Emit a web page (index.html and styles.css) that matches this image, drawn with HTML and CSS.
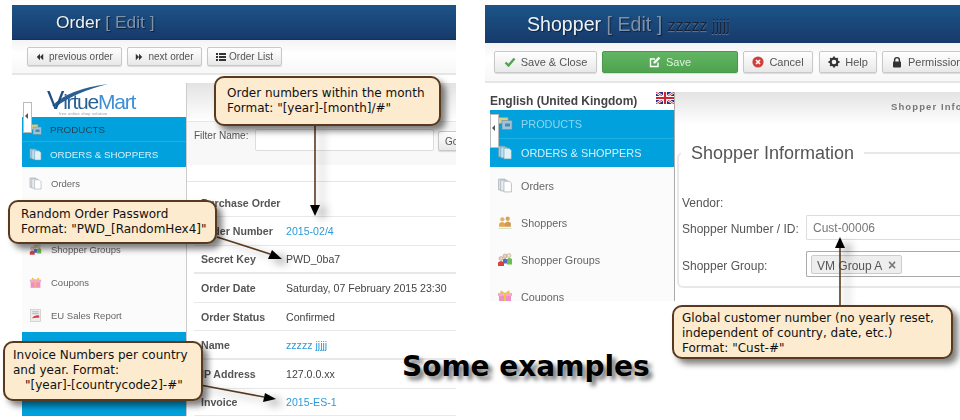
FILE: index.html
```html
<!DOCTYPE html>
<html lang="en">
<head>
    <meta charset="UTF-8">
    <meta name="viewport" content="width=device-width, initial-scale=1.0">
    <title>Some examples</title>
    <link rel="stylesheet" href="styles.css">
</head>
<body>
    <svg class="defs" width="0" height="0">
        <symbol id="i-prev" viewBox="0 0 10 10"><path d="M5 1v8L1 5zM9 1v8L5 5z" fill="#333"/></symbol>
        <symbol id="i-next" viewBox="0 0 10 10"><path d="M1 1v8l4-4zM5 1v8l4-4z" fill="#333"/></symbol>
        <symbol id="i-list" viewBox="0 0 10 10"><path d="M0 1h2v2H0zM3 1h7v2H3zM0 4h2v2H0zM3 4h7v2H3zM0 7h2v2H0zM3 7h7v2H3z" fill="#333"/></symbol>
        <symbol id="i-check" viewBox="0 0 12 12"><path d="M1.5 6.5l3 3 6-7" fill="none" stroke="#51a351" stroke-width="2.4"/></symbol>
        <symbol id="i-edit" viewBox="0 0 12 12"><path d="M9 6.5V10.5H1.5V3H6" fill="none" stroke="#fff" stroke-width="1.4"/><path d="M4.5 5.8L9.6 .8l1.7 1.7-5.1 5H4.5z" fill="#fff"/></symbol>
        <symbol id="i-cancel" viewBox="0 0 12 12"><circle cx="6" cy="6" r="5.6" fill="#d0403a"/><path d="M4 4l4 4M8 4l-4 4" stroke="#fff" stroke-width="1.6"/></symbol>
        <symbol id="i-gear" viewBox="0 0 12 12"><circle cx="6" cy="6" r="3.4" fill="none" stroke="#333" stroke-width="2.2"/><path d="M6 .5v11M.5 6h11M2.2 2.2l7.6 7.6M9.8 2.2l-7.6 7.6" stroke="#333" stroke-width="1.8" stroke-dasharray="2.4 6.2"/></symbol>
        <symbol id="i-lock" viewBox="0 0 12 12"><path d="M3.6 6V4a2.4 2.4 0 0 1 4.8 0v2" fill="none" stroke="#333" stroke-width="1.4"/><rect x="2" y="5.5" width="8" height="6" rx=".8" fill="#333"/></symbol>
        <symbol id="i-box" viewBox="0 0 16 14"><rect x="1" y="1" width="10" height="6" fill="#d8cf8a" stroke="#a39c63" stroke-width=".6"/><rect x="5" y="4" width="10" height="9" fill="#9fc3d8" stroke="#6f8ea3" stroke-width=".6"/><rect x="8" y="7" width="5" height="3" fill="#4f87b0"/></symbol>
        <symbol id="i-docs" viewBox="0 0 14 14"><path d="M1 1h6v10H1z" fill="#dfe3e6" stroke="#9aa5ad" stroke-width=".6"/><path d="M3 2h6v10H3z" fill="#eceff1" stroke="#9aa5ad" stroke-width=".6"/><path d="M6 3h5l2 2v8H6z" fill="#fff" stroke="#9aa5ad" stroke-width=".6"/></symbol>
        <symbol id="i-docs-on" viewBox="0 0 14 14"><path d="M1 1h6v10H1z" fill="#a9cfe2" stroke="#6d9cb3" stroke-width=".6"/><path d="M3 2h6v10H3z" fill="#c3e0ee" stroke="#6d9cb3" stroke-width=".6"/><path d="M6 3h5l2 2v8H6z" fill="#e0f1f9" stroke="#6d9cb3" stroke-width=".6"/></symbol>
        <symbol id="i-shoppers" viewBox="0 0 14 14"><circle cx="4.5" cy="4" r="2" fill="#e5b06a"/><circle cx="9.5" cy="3.5" r="2" fill="#d9a15a"/><path d="M1.5 11V8q3-3 5.500 0v3z" fill="#e9a24a"/><path d="M7 11V7.500q2.500-3 5.500 0V11z" fill="#cf9a52"/><path d="M1 12h12v1H1z" fill="#cfe3c2"/></symbol>
        <symbol id="i-groups" viewBox="0 0 16 14"><circle cx="4" cy="6" r="2" fill="#f1d2b0" stroke="#a66" stroke-width=".4"/><circle cx="8" cy="3.500" r="2" fill="#f1d2b0" stroke="#a66" stroke-width=".4"/><circle cx="12" cy="3" r="2" fill="#f4e4d2" stroke="#888" stroke-width=".4"/><path d="M1 13.500V10q3-3 6 0v3.500z" fill="#d8413f"/><path d="M6 11V7q2-2 4 0v4z" fill="#4a6fc4"/><path d="M10 12V6.500q2.500-2 5 0V12z" fill="#6cbf4d"/></symbol>
        <symbol id="i-gift" viewBox="0 0 16 14"><rect x="1" y="3.500" width="14" height="3" fill="#f5a8d0"/><rect x="2" y="6.500" width="12" height="7" fill="#f08fc2"/><path d="M7 3.500h2v10H7z" fill="#e8c64a"/><path d="M8 3.500L4 .8 3 3.500zM8 3.500L12 .8l1 2.700z" fill="#e8c64a"/></symbol>
        <symbol id="i-report" viewBox="0 0 12 14"><rect x=".5" y=".5" width="11" height="13" fill="#eee" stroke="#bbb" stroke-width=".6"/><path d="M2.500 3h7M2.500 5h7" stroke="#999" stroke-width=".7"/><path d="M2 10q3-4 8-3v2.500q-4-.5-8 .5z" fill="#d2453f"/></symbol>
        <symbol id="i-flag" viewBox="0 0 18 12">
            <rect width="18" height="12" fill="#24327f"/>
            <path d="M0 0l18 12M18 0L0 12" stroke="#fff" stroke-width="2.4"/>
            <path d="M0 0l18 12M18 0L0 12" stroke="#cc2233" stroke-width=".9"/>
            <path d="M9 0v12M0 6h18" stroke="#fff" stroke-width="4"/>
            <path d="M9 0v12M0 6h18" stroke="#cc2233" stroke-width="2.200"/>
        </symbol>
    </svg>

    <div class="canvas">
        <!-- order screen -->
        <section class="shot shot-order">
            <header class="head"><h1>Order <span class="edit">[ Edit ]</span></h1></header>
            <div class="toolbar">
                <button class="btn"><svg class="ico"><use href="#i-prev"/></svg>previous order</button>
                <button class="btn"><svg class="ico"><use href="#i-next"/></svg>next order</button>
                <button class="btn"><svg class="ico ico-list"><use href="#i-list"/></svg>Order List</button>
            </div>
            <div class="body">
                <aside class="side">
                    <div class="logo">
                        <svg class="swoosh" viewBox="0 0 60 24"><path d="M2 23Q18 6 58 1Q26 9 7 23z" fill="#2a5f94"/></svg>
                        <span class="logo-name"><b>V</b>irtue<i>Mart</i></span>
                        <span class="logo-tag">free online shop solution</span>
                    </div>
                    <div class="handle"></div>
                    <div class="group">
                        <div class="group-row dark"><svg class="nav-ico"><use href="#i-box"/></svg>PRODUCTS</div>
                        <div class="group-row"><svg class="nav-ico"><use href="#i-docs-on"/></svg>ORDERS &amp; SHOPPERS</div>
                    </div>
                    <div class="nav-row"><svg class="nav-ico"><use href="#i-docs"/></svg>Orders</div>
                    <div class="nav-row"><svg class="nav-ico"><use href="#i-shoppers"/></svg>Shoppers</div>
                    <div class="nav-row"><svg class="nav-ico"><use href="#i-groups"/></svg>Shopper Groups</div>
                    <div class="nav-row"><svg class="nav-ico"><use href="#i-gift"/></svg>Coupons</div>
                    <div class="nav-row"><svg class="nav-ico"><use href="#i-report"/></svg>EU Sales Report</div>
                    <div class="group group-end"></div>
                </aside>
                <main class="main">
                    <div class="tabs"></div>
                    <div class="filter">
                        <label>Filter Name:</label>
                        <span class="field"></span>
                        <button class="btn btn-go">Go</button>
                    </div>
                    <div class="spacer"></div>
                    <div class="row row-first"><b>Purchase Order</b></div>
                    <div class="row"><b>Order Number</b><a>2015-02/4</a></div>
                    <div class="row thick"><b>Secret Key</b><span>PWD_0ba7</span></div>
                    <div class="row"><b>Order Date</b><span>Saturday, 07 February 2015 23:30</span></div>
                    <div class="row"><b>Order Status</b><span>Confirmed</span></div>
                    <div class="row thick"><b>Name</b><a>zzzzz jjjjj</a></div>
                    <div class="row"><b>IP Address</b><span>127.0.0.xx</span></div>
                    <div class="row thick"><b>Invoice</b><a>2015-ES-1</a></div>
                </main>
            </div>
        </section>

        <!-- shopper screen -->
        <section class="shot shot-shopper">
            <header class="head"><h1>Shopper <span class="edit">[ Edit ]</span> <small>zzzzz jjjjj</small></h1></header>
            <div class="toolbar">
                <button class="btn btn-close"><svg class="ico"><use href="#i-check"/></svg>Save &amp; Close</button>
                <button class="btn btn-save"><svg class="ico"><use href="#i-edit"/></svg>Save</button>
                <button class="btn btn-cancel"><svg class="ico"><use href="#i-cancel"/></svg>Cancel</button>
                <button class="btn btn-help"><svg class="ico"><use href="#i-gear"/></svg>Help</button>
                <button class="btn btn-perm"><svg class="ico"><use href="#i-lock"/></svg>Permissions</button>
            </div>
            <div class="body">
                <aside class="side">
                    <div class="lang"><span>English (United Kingdom)</span><svg class="flag"><use href="#i-flag"/></svg></div>
                    <div class="handle"></div>
                    <div class="group">
                        <div class="group-row dim"><svg class="nav-ico"><use href="#i-box"/></svg>PRODUCTS</div>
                        <div class="group-row"><svg class="nav-ico"><use href="#i-docs-on"/></svg>ORDERS &amp; SHOPPERS</div>
                    </div>
                    <div class="nav-row"><svg class="nav-ico"><use href="#i-docs"/></svg>Orders</div>
                    <div class="nav-row"><svg class="nav-ico"><use href="#i-shoppers"/></svg>Shoppers</div>
                    <div class="nav-row"><svg class="nav-ico"><use href="#i-groups"/></svg>Shopper Groups</div>
                    <div class="nav-row"><svg class="nav-ico"><use href="#i-gift"/></svg>Coupons</div>
                </aside>
                <main class="main">
                    <div class="tabs">Shopper Information</div>
                    <fieldset class="info">
                        <legend>Shopper Information</legend>
                        <div class="form-row form-vendor"><label>Vendor:</label></div>
                        <div class="form-row form-number"><label>Shopper Number / ID:</label><span class="input">Cust-00006</span></div>
                        <div class="form-row"><label>Shopper Group:</label><span class="input select"><span class="tag">VM Group A <em>×</em></span></span></div>
                    </fieldset>
                </main>
            </div>
        </section>

        <svg class="arrows" viewBox="0 0 960 420">
            <path d="M315 125V206" class="shaft"/><path d="M315 216l-5-11h10z"/>
            <path d="M217 237L270 254" class="shaft"/><path d="M282 259l-14 0 4-9z"/>
            <path d="M200 385L264 397" class="shaft"/><path d="M276 399l-13 3 2-9z"/>
            <path d="M840 305V247" class="shaft"/><path d="M840 237l-5 11h10z"/>
        </svg>

        <div class="note note-month">Order numbers within the month<br>Format: "[year]-[month]/#"</div>
        <div class="note note-pass">Random Order Password<br>Format: "PWD_[RandomHex4]"</div>
        <div class="note note-invoice">Invoice Numbers per country<br>and year. Format:<br><span class="indent">"[year]-[countrycode2]-#"</span></div>
        <div class="note note-cust">Global customer number (no yearly reset,<br>independent of country, date, etc.)<br>Format: "Cust-#"</div>

        <div class="caption">Some examples</div>
    </div>
</body>
</html>
```

FILE: styles.css
```css
body {
    margin: 0;
    background: #fff;
    font-family: "Liberation Sans", Arial, sans-serif;
    color: #444;
}
.defs {
    position: absolute;
}
.canvas {
    position: relative;
    width: 960px;
    height: 420px;
    overflow: hidden;
}

/* the two screenshots sit freely on the canvas */
.shot {
    position: absolute;
    overflow: hidden;
    background: #fff;
    filter: blur(0.35px);
}
.shot-order {
    left: 12px;
    top: 5px;
    width: 444px;
    height: 411px;
}
.shot-shopper {
    left: 485px;
    top: 5px;
    width: 475px;
    height: 296px;
}

.head {
    display: flex;
    align-items: center;
    height: 34px;
    padding-left: 44px;
    background: linear-gradient(#1c5488, #173a6b);
    border-bottom: 1px solid #123059;
}
.head h1 {
    margin: 0;
    font-size: 17.4px;
    font-weight: normal;
    color: #eef2f6;
    text-shadow: 1px 1px 1px rgba(0, 0, 0, 0.5);
    white-space: nowrap;
}
.edit {
    color: #7f90a6;
}
.head small {
    font-size: 16px;
    color: #16233a;
    text-shadow: 0 1px 1px rgba(255, 255, 255, 0.3);
}
.shot-shopper .head {
    height: 38px;
    padding-left: 42px;
    border-bottom: 0;
}
.shot-shopper .head h1 {
    font-size: 19.6px;
}

.toolbar {
    display: flex;
    gap: 5px;
    height: 35px;
    padding: 7px 0 0 15px;
    box-sizing: border-box;
    background: linear-gradient(#f3f3f3, #fff 40%, #f7f7f7);
    border-bottom: 2px solid #e6e6e6;
}
.shot-shopper .toolbar {
    height: 40px;
    padding: 8px 0 0 9px;
}
.btn {
    display: flex;
    align-items: center;
    justify-content: center;
    gap: 5px;
    height: 19px;
    padding: 0 6px;
    flex: none;
    box-sizing: border-box;
    font: 10px "Liberation Sans", Arial, sans-serif;
    color: #555;
    white-space: nowrap;
    background: linear-gradient(#fff, #e8e8e8);
    border: 1px solid #c8c8c8;
    border-radius: 2px;
    box-shadow: 0 1px 1px rgba(0, 0, 0, 0.12);
}
.shot-order .btn:nth-child(1) { width: 95px; }
.shot-order .btn:nth-child(2) { width: 75px; }
.shot-order .btn:nth-child(3) { width: 75px; }
.shot-shopper .btn {
    height: 22px;
    font-size: 11px;
}
.shot-shopper .btn-close { width: 103px; }
.shot-shopper .btn-save {
    width: 136px;
    color: #dff0df;
    background: linear-gradient(#62b562, #4fa34f);
    border-color: #4a994a;
}
.shot-shopper .btn-cancel { width: 70px; }
.shot-shopper .btn-help {
    width: 58px;
    margin-left: 1px;
}
.shot-shopper .btn-perm {
    width: 92px;
    padding-left: 8px;
    justify-content: flex-start;
}
.ico {
    width: 8px;
    height: 8px;
    flex: none;
}
.ico-list {
    width: 10px;
    height: 10px;
    margin-right: -2px;
}
.shot-shopper .ico {
    width: 12px;
    height: 12px;
}

.body {
    display: flex;
    align-items: flex-start;
    padding-left: 10px;
}
.shot-shopper .body {
    padding-left: 5px;
}
.side {
    position: relative;
    flex: none;
    width: 164px;
    background: #fbfbfb;
}
.shot-shopper .side {
    width: 184px;
}

.logo {
    position: relative;
    height: 42px;
    background: #fff;
}
.logo-name {
    position: absolute;
    left: 25px;
    top: 13px;
    font-size: 21px;
    line-height: 24px;
    letter-spacing: -1.2px;
    color: #2a5f94;
}
.logo-name b {
    font-size: 26px;
    font-weight: normal;
    color: #1d4f85;
}
.logo-name i {
    font-style: normal;
    color: #3f8fd6;
}
.logo-tag {
    position: absolute;
    left: 37px;
    top: 36px;
    font-size: 4px;
    line-height: 5px;
    letter-spacing: 0.2px;
    color: #89a;
    white-space: nowrap;
}
.swoosh {
    position: absolute;
    left: 28px;
    top: 8px;
    width: 60px;
    height: 24px;
}
.handle {
    position: absolute;
    left: 1px;
    top: 27px;
    width: 7px;
    height: 29px;
    background: #fff;
    border: 1px solid #bbb;
    z-index: 2;
}
.handle::after {
    content: "";
    position: absolute;
    left: 1px;
    top: 10px;
    border: 3px solid transparent;
    border-right-color: #555;
    border-left: 0;
}
.shot-shopper .handle {
    left: 0;
    top: 31px;
    height: 32px;
}

.group {
    background: #00a1dd;
}
.group-end {
    height: 85px;
}
.group-row {
    display: flex;
    align-items: center;
    gap: 8px;
    height: 25px;
    padding-left: 7px;
    font-size: 9.8px;
    color: #d5eef9;
    border-bottom: 1px solid #1db0e4;
    box-sizing: border-box;
}
.group-row:last-child {
    border-bottom: 0;
}
.group-row.dark {
    color: #24435a;
}
.group-row.dim {
    color: #8fd3ef;
}
.shot-shopper .group-row {
    height: 28.5px;
    font-size: 10.9px;
}
.nav-row {
    display: flex;
    align-items: center;
    gap: 9px;
    height: 33px;
    padding-left: 7px;
    font-size: 9.5px;
    color: #666;
}
.shot-shopper .nav-row {
    height: 37px;
    gap: 8px;
    font-size: 10.8px;
}
.nav-ico {
    width: 13px;
    height: 13px;
    flex: none;
}
.shot-shopper .nav-ico {
    width: 16px;
    height: 15px;
}

.lang {
    display: flex;
    justify-content: space-between;
    align-items: flex-end;
    height: 27px;
    background: #fff;
    font-size: 12px;
    font-weight: bold;
    color: #444;
    white-space: nowrap;
}
.lang span {
    padding-bottom: 2px;
}
.flag {
    width: 18px;
    height: 12px;
    margin-bottom: 6px;
}

.main {
    flex: 1;
    min-width: 0;
    margin-top: 8px;
    border-left: 1px solid #ccc;
    font-size: 10.6px;
}
.shot-shopper .main {
    margin-top: 9px;
    height: 300px;
    border-left-color: #aaa;
}
.tabs {
    height: 39px;
    background: linear-gradient(#e3e3e3, #fff);
    border-bottom: 1px solid #e6e6e6;
    box-sizing: border-box;
}
.shot-shopper .tabs {
    height: 33px;
    padding: 9px 0 0 216px;
    border-bottom: 0;
    font-size: 9.5px;
    font-weight: bold;
    letter-spacing: 1.1px;
    color: #777;
    white-space: nowrap;
}
.filter {
    display: flex;
    align-items: flex-start;
    gap: 3px;
    height: 43px;
    padding: 7px 0 0 7px;
    box-sizing: border-box;
    background: #f8f8f8;
}
.filter label {
    width: 58px;
    flex: none;
    padding-top: 1px;
    font-size: 10px;
    color: #555;
}
.field {
    width: 179px;
    height: 22px;
    flex: none;
    box-sizing: border-box;
    background: #fff;
    border: 1px solid #ddd;
    border-radius: 2px;
}
.btn-go {
    width: 30px;
    height: 20px;
    margin: 2px 0 0 1px;
    justify-content: flex-start;
}
.spacer {
    height: 16px;
    border-bottom: 1px solid #e6e6e6;
}
.row {
    display: grid;
    grid-template-columns: 85px 1fr;
    align-items: center;
    height: 28.6px;
    margin-left: 7px;
    padding-left: 7px;
    border-bottom: 1px solid #e8e8e8;
    box-sizing: border-box;
    white-space: nowrap;
}
.row.thick {
    border-bottom-width: 2px;
}
.row-first {
    height: 35px;
    padding-top: 8px;
}
.row b {
    color: #555;
    font-size: 10.6px;
}
.row a {
    color: #2a9bd8;
}

.info {
    margin: 18px 0 0 2px;
    padding: 0 0 9px 3px;
    border: 2px solid #e8e8e8;
    border-right: 0;
    border-radius: 6px 0 0 6px;
    font-size: 12px;
    color: #555;
}
.info legend {
    margin-left: -1px;
    padding: 0 10px;
    font-size: 18px;
    line-height: 20px;
    color: #555;
}
.form-row {
    display: grid;
    grid-template-columns: 124px 1fr;
    align-items: center;
    margin-top: 11px;
}
.form-row label {
    padding-top: 3px;
}
.form-vendor {
    margin-top: 30px;
    height: 10px;
    margin-bottom: 12px;
}
.form-number {
    margin-top: 0;
}
.input {
    display: block;
    height: 25px;
    line-height: 24px;
    padding-left: 6px;
    font-size: 12px;
    color: #777;
    background: #fff;
    border: 1px solid #ddd;
    border-right: 0;
    border-radius: 2px 0 0 2px;
    box-sizing: border-box;
}
.select {
    display: flex;
    align-items: center;
    height: 26px;
    padding-left: 4px;
    border-color: #aaa;
}
.tag {
    width: 91px;
    height: 19px;
    line-height: 18px;
    padding-left: 5px;
    box-sizing: border-box;
    font-size: 12px;
    color: #555;
    background: #eee;
    border: 1px solid #ccc;
    border-radius: 2px;
}
.tag em {
    margin-left: 3px;
    font-size: 14px;
    font-style: normal;
    font-weight: bold;
    color: #777;
}

/* arrows and notes lie over the screenshots */
.arrows {
    position: absolute;
    left: 0;
    top: 0;
    width: 960px;
    height: 420px;
    filter: drop-shadow(7px 4px 4px rgba(0, 0, 0, 0.4));
}
.shaft {
    fill: none;
    stroke: #5a3a1e;
    stroke-width: 1.6;
}
.note {
    position: absolute;
    box-sizing: border-box;
    font-family: "DejaVu Sans", sans-serif;
    font-size: 12px;
    line-height: 15px;
    color: #111;
    white-space: nowrap;
    background: #fcebce;
    border: 2.5px solid #593a1f;
    border-radius: 10px;
    box-shadow: 5px 5px 6px rgba(0, 0, 0, 0.5);
}
.note-month {
    left: 214px;
    top: 76px;
    width: 227px;
    height: 50px;
    padding: 8px 0 0 11px;
}
.note-pass {
    left: 8px;
    top: 200px;
    width: 209px;
    height: 44px;
    padding: 5px 0 0 11px;
}
.note-invoice {
    left: 3px;
    top: 341px;
    width: 200px;
    height: 60px;
    padding: 5px 0 0 8px;
}
.indent {
    margin-left: 12px;
}
.note-cust {
    left: 672px;
    top: 305px;
    width: 281px;
    height: 54px;
    padding: 4px 0 0 8px;
}
.caption {
    position: absolute;
    left: 402px;
    top: 349px;
    font-family: "DejaVu Sans", sans-serif;
    font-size: 28px;
    line-height: 36px;
    font-weight: bold;
    color: #000;
    white-space: nowrap;
    text-shadow: 4px 4px 4px rgba(0, 0, 0, 0.55);
}
```
